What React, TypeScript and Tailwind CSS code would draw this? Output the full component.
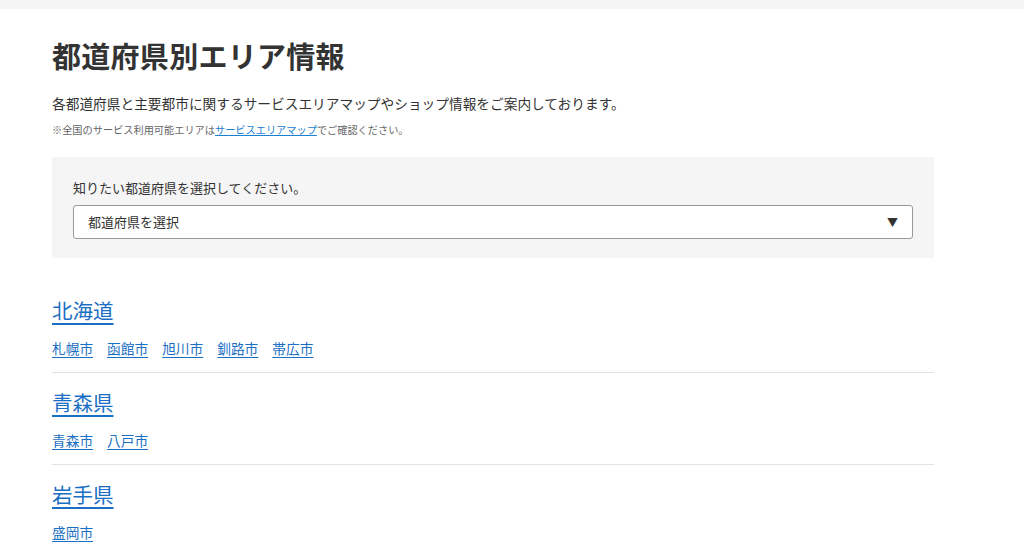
const font = "font-['Noto_Sans_CJK_JP','Noto_Sans',sans-serif]";

const prefectures = [
  { name: "北海道", cities: ["札幌市", "函館市", "旭川市", "釧路市", "帯広市"] },
  { name: "青森県", cities: ["青森市", "八戸市"] },
  { name: "岩手県", cities: ["盛岡市"] },
];

export default function App() {
  return (
    <div className={`min-h-screen bg-white text-[#333] ${font}`}>
      <div className="h-[9px] bg-[#f5f5f5]" />
      <main className="ml-[52px] w-[882px]">
        <h1 className="mt-[24px] text-[29px] leading-[44px] font-bold tracking-[0.01em]">都道府県別エリア情報</h1>
        <p className="mt-[14px] text-[13.7px] leading-[24px]">
          各都道府県と主要都市に関するサービスエリアマップやショップ情報をご案内しております。
        </p>
        <p className="mt-[7px] text-[10.2px] leading-[16px] text-[#666]">
          ※全国のサービス利用可能エリアは
          <a href="#" className="text-[#1a80d0] underline">サービスエリアマップ</a>
          でご確認ください。
        </p>

        <div className="mt-[19px] bg-[#f5f5f5] px-[21px] pt-[20px] pb-[19px]">
          <p className="text-[13px] leading-[22px]">知りたい都道府県を選択してください。</p>
          <div className="mt-[6px] flex h-[34px] items-center justify-between rounded-[3px] border border-[#999] bg-white pr-[14px] pl-[14px]">
            <span className="text-[13px]">都道府県を選択</span>
            <span className="text-[11px] text-[#333]">▼</span>
          </div>
        </div>

        <div className="mt-[23px]">
          {prefectures.map((p, i) => (
            <section
              key={p.name}
              className={`pt-[14px] pb-[14px] ${i < prefectures.length - 1 ? "border-b border-[#e2e2e2]" : ""}`}
            >
              <a href="#" className="block w-fit text-[20.5px] leading-[30px] text-[#1a6fc4] underline underline-offset-[4px]">
                {p.name}
              </a>
              <div className="mt-[13px] flex gap-[14px]">
                {p.cities.map((c) => (
                  <a key={c} href="#" className="text-[13.7px] leading-[20px] text-[#1a6fc4] underline underline-offset-[3px]">
                    {c}
                  </a>
                ))}
              </div>
            </section>
          ))}
        </div>
      </main>
    </div>
  );
}
